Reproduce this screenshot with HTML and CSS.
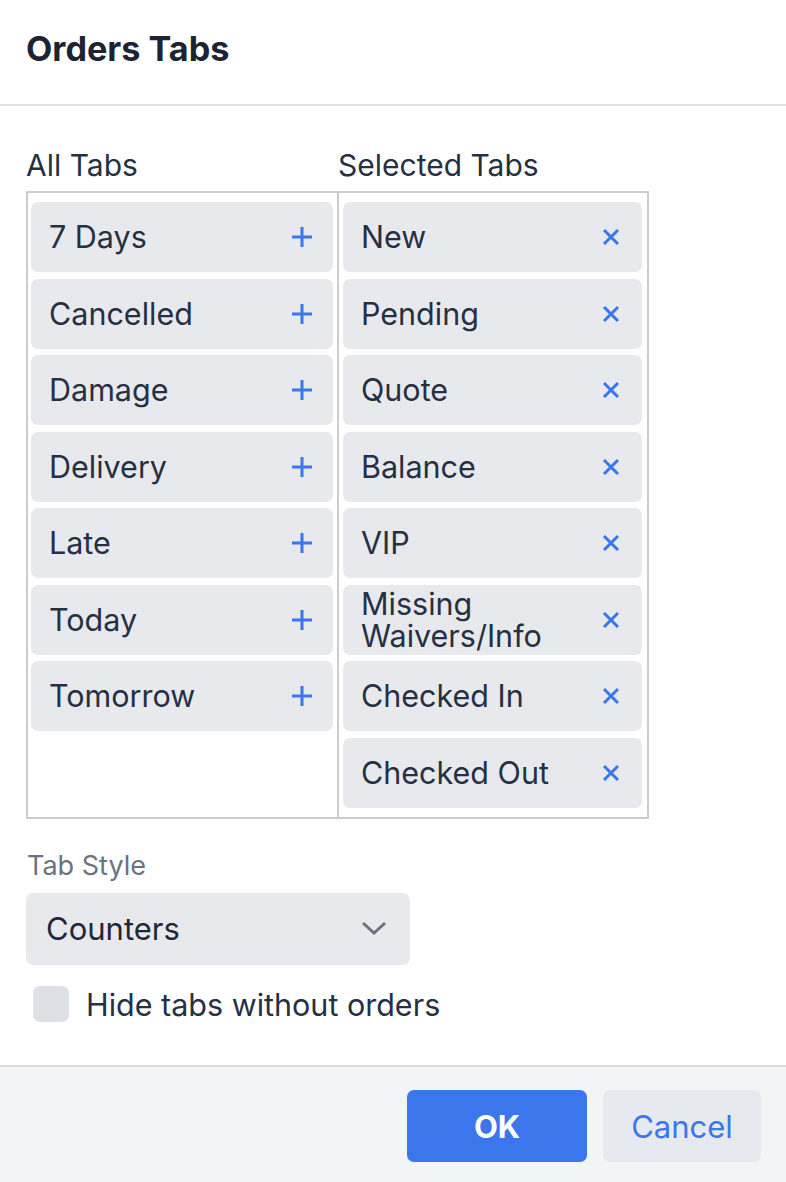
FILE: index.html
```html
<!DOCTYPE html>
<html lang="en">
<head>
<meta charset="utf-8">
<title>Orders Tabs</title>
<link rel="stylesheet" href="styles.css">
</head>
<body>
<div class="dialog">
  <header class="dlg-header">
    <h1 class="dlg-title">Orders Tabs</h1>
  </header>
  <main class="dlg-body">
    <div class="cols-labels">
      <div class="col-label">All Tabs</div>
      <div class="col-label">Selected Tabs</div>
    </div>
    <div class="cols-box">
      <div class="col col-left">
        <div class="item"><span class="item-text">7 Days</span><svg class="ic-plus" viewBox="0 0 22 22"><path d="M11 1V21M1 11H21"/></svg></div>
        <div class="item"><span class="item-text">Cancelled</span><svg class="ic-plus" viewBox="0 0 22 22"><path d="M11 1V21M1 11H21"/></svg></div>
        <div class="item"><span class="item-text">Damage</span><svg class="ic-plus" viewBox="0 0 22 22"><path d="M11 1V21M1 11H21"/></svg></div>
        <div class="item"><span class="item-text">Delivery</span><svg class="ic-plus" viewBox="0 0 22 22"><path d="M11 1V21M1 11H21"/></svg></div>
        <div class="item"><span class="item-text">Late</span><svg class="ic-plus" viewBox="0 0 22 22"><path d="M11 1V21M1 11H21"/></svg></div>
        <div class="item"><span class="item-text">Today</span><svg class="ic-plus" viewBox="0 0 22 22"><path d="M11 1V21M1 11H21"/></svg></div>
        <div class="item"><span class="item-text">Tomorrow</span><svg class="ic-plus" viewBox="0 0 22 22"><path d="M11 1V21M1 11H21"/></svg></div>
      </div>
      <div class="col col-right">
        <div class="item"><span class="item-text">New</span><svg class="ic-x" viewBox="0 0 18 18"><path d="M2 2L16 16M16 2L2 16"/></svg></div>
        <div class="item"><span class="item-text">Pending</span><svg class="ic-x" viewBox="0 0 18 18"><path d="M2 2L16 16M16 2L2 16"/></svg></div>
        <div class="item"><span class="item-text">Quote</span><svg class="ic-x" viewBox="0 0 18 18"><path d="M2 2L16 16M16 2L2 16"/></svg></div>
        <div class="item"><span class="item-text">Balance</span><svg class="ic-x" viewBox="0 0 18 18"><path d="M2 2L16 16M16 2L2 16"/></svg></div>
        <div class="item"><span class="item-text">VIP</span><svg class="ic-x" viewBox="0 0 18 18"><path d="M2 2L16 16M16 2L2 16"/></svg></div>
        <div class="item"><span class="item-text item-wrap">Missing Waivers/Info</span><svg class="ic-x" viewBox="0 0 18 18"><path d="M2 2L16 16M16 2L2 16"/></svg></div>
        <div class="item"><span class="item-text">Checked In</span><svg class="ic-x" viewBox="0 0 18 18"><path d="M2 2L16 16M16 2L2 16"/></svg></div>
        <div class="item"><span class="item-text">Checked Out</span><svg class="ic-x" viewBox="0 0 18 18"><path d="M2 2L16 16M16 2L2 16"/></svg></div>
      </div>
    </div>

    <div class="field">
      <div class="field-label">Tab Style</div>
      <div class="select">
        <span class="select-value">Counters</span>
        <svg class="ic-chev" viewBox="0 0 26 15"><path d="M2 2L13 12L24 2"/></svg>
      </div>
    </div>

    <label class="check-row">
      <span class="checkbox"></span>
      <span class="check-label">Hide tabs without orders</span>
    </label>
  </main>
  <footer class="dlg-footer">
    <button class="btn btn-primary">OK</button>
    <button class="btn btn-secondary">Cancel</button>
  </footer>
</div>
</body>
</html>
```

FILE: styles.css
```css
* { box-sizing: border-box; }

html, body {
  margin: 0;
  padding: 0;
  background: #ffffff;
}

body {
  font-family: Inter, "Noto Sans", "Liberation Sans", sans-serif;
  color: #263043;
}

.dialog {
  width: 786px;
  height: 1182px;
  display: flex;
  flex-direction: column;
}

.dlg-header {
  height: 106px;
  border-bottom: 2px solid #dfe2e7;
  padding: 0 26px;
  display: flex;
  align-items: center;
}

.dlg-title {
  margin: 0 0 8px 0;
  font-size: 34.2px;
  font-weight: 700;
  color: #1c2434;
}

.dlg-body {
  flex: 1;
  padding: 40px 26px 0 26px;
}

.cols-labels {
  display: grid;
  grid-template-columns: 312px 311px;
  height: 45px;
}

.col-label {
  font-size: 30px;
  line-height: 38px;
  color: #263043;
}

.cols-box {
  display: grid;
  grid-template-columns: 311px 308px;
  border: 2px solid #cccccc;
  width: 623px;
}

.col {
  display: flex;
  flex-direction: column;
  gap: 6.5px;
  padding: 9px 4px 9px 3px;
}

.col-left {
  border-right: 2px solid #cccccc;
}

.col-right {
  padding: 9px 5px 9px 4px;
}

.item {
  height: 70px;
  background: #e8e9ed;
  border-radius: 7px;
  display: flex;
  align-items: center;
  justify-content: space-between;
  padding: 0 20px 0 18px;
}

.item-text {
  font-size: 30.5px;
  line-height: 32px;
  color: #263043;
}

.item-wrap {
  width: 210px;
}

.ic-plus {
  width: 22px;
  height: 22px;
  fill: none;
  stroke: #3b76ec;
  stroke-width: 3;
  flex: none;
}

.ic-x {
  width: 18px;
  height: 18px;
  fill: none;
  stroke: #3b76ec;
  stroke-width: 3;
  flex: none;
  margin-right: 2px;
}

.field {
  margin-top: 32px;
}

.field-label {
  font-size: 27px;
  line-height: 30px;
  color: #6b7280;
  margin-bottom: 12px;
  padding-left: 1px;
}

.select {
  width: 384px;
  height: 72px;
  background: #e8e9ed;
  border-radius: 7px;
  display: flex;
  align-items: center;
  justify-content: space-between;
  padding: 0 23px 0 20px;
}

.select-value {
  font-size: 31px;
  color: #1f2838;
}

.ic-chev {
  width: 26px;
  height: 15px;
  fill: none;
  stroke: #6b7280;
  stroke-width: 3;
}

.check-row {
  display: flex;
  align-items: center;
  gap: 17px;
  margin-top: 21px;
  padding-left: 7px;
}

.checkbox {
  width: 36px;
  height: 36px;
  background: #dde0e5;
  border-radius: 7px;
  display: block;
}

.check-label {
  font-size: 30.5px;
  color: #263043;
}

.dlg-footer {
  height: 117px;
  border-top: 2px solid #d6d9df;
  background: #f3f4f6;
  display: flex;
  justify-content: flex-end;
  align-items: flex-start;
  gap: 16px;
  padding: 23px 25px 0 0;
}

.btn {
  height: 72px;
  border: none;
  border-radius: 7px;
  font-family: inherit;
  font-size: 31px;
}

.btn-primary {
  width: 180px;
  background: #3b76ec;
  color: #ffffff;
  font-weight: 700;
}

.btn-secondary {
  width: 158px;
  background: #e6e9ef;
  color: #3b76ec;
}
```
